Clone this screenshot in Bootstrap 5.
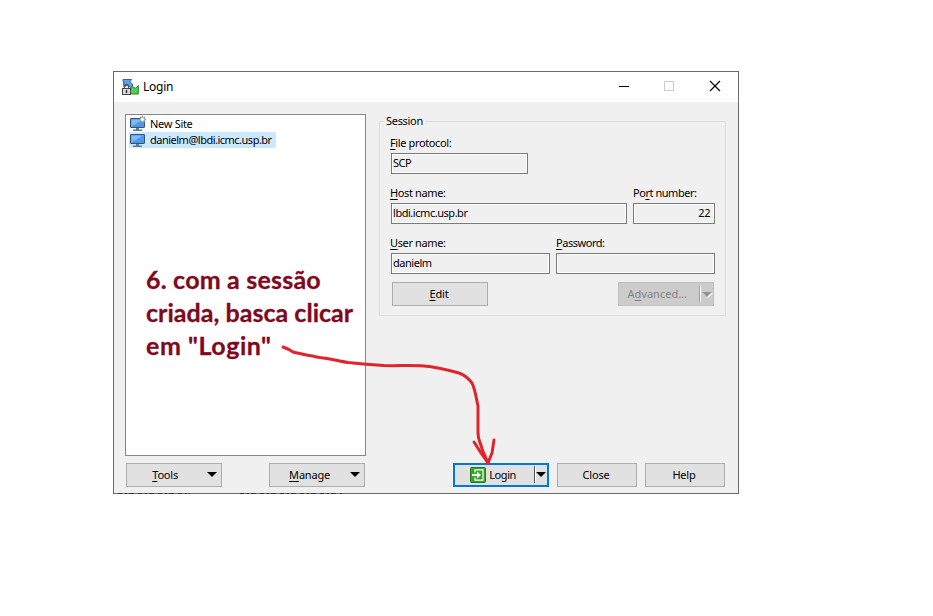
<!DOCTYPE html>
<html lang="pt-BR">
<head>
<meta charset="utf-8">
<title>Login</title>
<link href="https://cdn.jsdelivr.net/npm/bootstrap@5.3.0/dist/css/bootstrap.min.css" rel="stylesheet">
<style>
body{background:#fff;color:#000;font:11px/14px "Noto Sans","Open Sans",sans-serif;letter-spacing:-.46px;width:933px;height:616px;overflow:hidden}
.stage{padding:71px 0 0 113px}
.win{width:626px;height:423px;border:1px solid #6a6a6a;background:#f0f0f0}
.titlebar{height:30px;background:#fff;padding-left:8px}
.title-text{font-size:12px;letter-spacing:-.25px}
.winbtns{margin-right:2px}
.winbtn{width:45px;height:30px}
.body-row{padding:12px 11px 0;height:354px}
.sites{width:241px;height:342px;background:#fff;border:1px solid #828790;padding:1px 0 0 3px}
.site{height:16px;width:147px}
.site span{padding-left:3px;flex:1;height:16px;line-height:16px;white-space:nowrap}
.site:not(.sel) span{letter-spacing:-.3px}
.site.sel{background:#cce8ff}
.site.sel span{letter-spacing:-.5px}
.note{font:700 25px/33px Lato,sans-serif;letter-spacing:.03px;color:#7f0a1e;-webkit-text-stroke:.3px #7f0a1e;margin:115px 0 0 17px;white-space:nowrap}
.note .l1{letter-spacing:.2px}.note .l3{letter-spacing:.55px}
.group{width:347px;height:195px;border:1px solid #dcdcdc;margin:7px 0 0 13px;padding:14px 10px 0 11px;position:relative}
.group legend{position:absolute;top:-8px;left:4px;width:auto;font-size:11px;line-height:14px;background:#f0f0f0;padding:0 2px;margin:0;letter-spacing:-.3px}
.lbl{height:17px;line-height:14px;display:block;white-space:nowrap;letter-spacing:-.38px;margin-left:-1px}
.lbl.flush{margin-left:0;letter-spacing:-.46px}
.fld{height:21px;border:1px solid #7a7a7a;box-shadow:inset 0 0 0 1px #fff;padding:0 4px 0 1px;line-height:18px}
.w138{width:137px}.w237{width:236px}.w82{width:82px}.w160{width:159px}.w159{width:159px}
.frow{height:38px;margin-bottom:12px}
.wbtn{height:24px;width:96px;border:1px solid #adadad;border-radius:0;background:#e1e1e1;padding:0;font-size:11px;line-height:22px;color:#000;letter-spacing:-.2px;display:flex;align-items:center;justify-content:center;white-space:nowrap}
.edit{padding-right:2px}
.w80{width:80px;padding-right:2px}
.wbtn.off{background:#ccc;border-color:#bfbfbf;color:#838383;letter-spacing:0;opacity:1}
.with-arrow{justify-content:flex-end;padding-right:3px}
.wbtn.off.with-arrow{padding-right:0}
.grp-btns{margin:-8px 1px 0 1px}
.foot{padding:7px 13px 0 12px}
.gap-tools{margin-right:47px}.gap-manage{margin-right:88px}
.tools-text{margin-right:27px}
.manage-text{margin-right:18px}
.go{border:2px solid #0078d7;padding-right:0}
.go-text{margin-right:18px;padding-left:3px;letter-spacing:-.4px}
u{text-underline-offset:1.5px}
.ink{position:absolute;left:0;top:0;pointer-events:none}
svg{display:block;flex:none}
</style>
<script src="https://cdn.jsdelivr.net/npm/bootstrap@5.3.0/dist/js/bootstrap.bundle.min.js"></script>
</head>
<body>
<main class="stage">
<section class="win">
<header class="titlebar d-flex align-items-center">
<svg width="17" height="16" viewBox="0 0 17 16"><path d="M1 .5h8.500L8 2.500l3 3.500-2.500 2.500L5.500 6 2 8z" fill="#5aa3f0" stroke="#1c559f" stroke-width=".9"/><path d="M16.300 6.500V15H8.500V10l2-2.500 3 1.800z" fill="#55cf50" stroke="#17792a" stroke-width=".9"/><path d="M2.500 10V7.500a2 2 0 0 1 4 0V10" fill="none" stroke="#555" stroke-width="1.300"/><rect x=".5" y="9.500" width="8" height="6" fill="#d9d9d9" stroke="#444"/><path d="M4.500 11v3" stroke="#222" stroke-width="1.300"/></svg>
<span class="title-text ms-1">Login</span>
<div class="winbtns d-flex ms-auto">
<svg class="winbtn" viewBox="0 0 45 30"><path d="M18 14.500h10" stroke="#000"/></svg>
<svg class="winbtn" viewBox="0 0 45 30"><rect x="18.500" y="9.500" width="9" height="9" fill="none" stroke="#ccc"/></svg>
<svg class="winbtn" viewBox="0 0 45 30"><path d="M19 9l10 10M29 9l-10 10" stroke="#000" stroke-width="1.200"/></svg>
</div>
</header>
<div class="body-row d-flex">
<div class="sites">
<div class="site d-flex align-items-center"><svg width="18" height="16" viewBox="0 0 18 16"><use href="#pc"/><path d="M13.500 0v7M10 3.500h7M11 1l5 5M16 1l-5 5" stroke="#8395ab" stroke-width="1.400"/><circle cx="13.500" cy="3.500" r="2" fill="#fff" stroke="#9fb0c4" stroke-width=".8"/></svg><span>New Site</span></div>
<div class="site sel d-flex align-items-center"><svg width="18" height="16" viewBox="0 0 18 16"><g id="pc"><rect x="1.500" y="2.500" width="14" height="9" rx=".5" fill="#4d98e6" stroke="#36536f"/><path d="M2.500 10.500v-7h11.500z" fill="#7dbaf6"/><path d="M7 12h3v1.500h3V15H4v-1.500h3z" fill="#66798e"/></g></svg><span>danielm@lbdi.icmc.usp.br</span></div>
<div class="note"><span class="l1">6. com a sessão</span><br>criada, basca clicar<br><span class="l3">em "Login"</span></div>
</div>
<fieldset class="group">
<legend>Session</legend>
<div class="frow"><label class="lbl"><u>F</u>ile protocol:</label><div class="fld w138">SCP</div></div>
<div class="frow d-flex justify-content-between"><div><label class="lbl"><u>H</u>ost name:</label><div class="fld w237">lbdi.icmc.usp.br</div></div><div><label class="lbl flush">Po<u>r</u>t number:</label><div class="fld w82 text-end">22</div></div></div>
<div class="frow d-flex justify-content-between"><div><label class="lbl"><u>U</u>ser name:</label><div class="fld w160">danielm</div></div><div><label class="lbl flush"><u>P</u>assword:</label><div class="fld w159"></div></div></div>
<div class="grp-btns d-flex justify-content-between pt-1"><button class="btn wbtn edit"><span><u>E</u>dit</span></button>
<button class="btn wbtn off with-arrow"><span class="me-2 pe-1">A<u>d</u>vanced...</span><svg width="14" height="20" viewBox="0 0 14 20"><path d="M.5 2v16" stroke="#a0a0a0"/><path d="M1.500 2v16" stroke="#fff"/><path d="M4 9h10l-5 5z" fill="#fff"/><path d="M3 8h10l-5 5z" fill="#939393"/></svg></button></div>
</fieldset>
</div>
<footer class="foot d-flex">
<button class="btn wbtn with-arrow gap-tools"><span class="tools-text"><u>T</u>ools</span><svg width="13" height="8" viewBox="0 0 13 8"><path d="M2 1h10L7 6z"/></svg></button>
<button class="btn wbtn with-arrow gap-manage"><span class="manage-text"><u>M</u>anage</span><svg width="13" height="8" viewBox="0 0 13 8"><path d="M2 1h10L7 6z"/></svg></button>
<button class="btn wbtn with-arrow go me-2"><svg width="16" height="16" viewBox="0 0 16 16"><rect x=".5" y=".5" width="15" height="15" rx="1" fill="#37a32b" stroke="#217d1b"/><path d="M5 5.500V2.800h8v10.400H5v-2.700" fill="none" stroke="#fff" stroke-width="1.200"/><path d="M2 7h5V4.500L11 8l-4 3.500V9H2z" fill="#fff"/></svg><span class="go-text">Login</span><svg width="13" height="20" viewBox="0 0 13 20"><path d="M.5 1v17" stroke="#555"/><path d="M1.500 1v17" stroke="#fff"/><path d="M2 7h10l-5 5z"/></svg></button>
<button class="btn wbtn w80 me-2">Close</button>
<button class="btn wbtn w80">Help</button>
</footer>
</section>
</main>
<svg class="ink" width="933" height="616" viewBox="0 0 933 616" fill="none">
<path d="M118 493.500h72M240 493.500h102" stroke="#333" stroke-dasharray="4 3 2 2 5 4"/>
<g stroke="#e0242b" stroke-width="3" stroke-linecap="round" stroke-linejoin="round"><path d="M283 347l6 2.500 4 2.500c9 2.500 18 3.500 27 5.500 10 1 18 3.500 28 5 12 1.200 24 2.200 36 3 13 .5 27-.5 40 .5 13 1 24 4 35 7 6 2 10 6 13 10 4 9 4 15 6 23v27c0 8 3 10 4 16l6 14"/><path d="M474 442l7 11 7 10M494 440l-2 13-4 10"/></g>
</svg>
</body>
</html>
